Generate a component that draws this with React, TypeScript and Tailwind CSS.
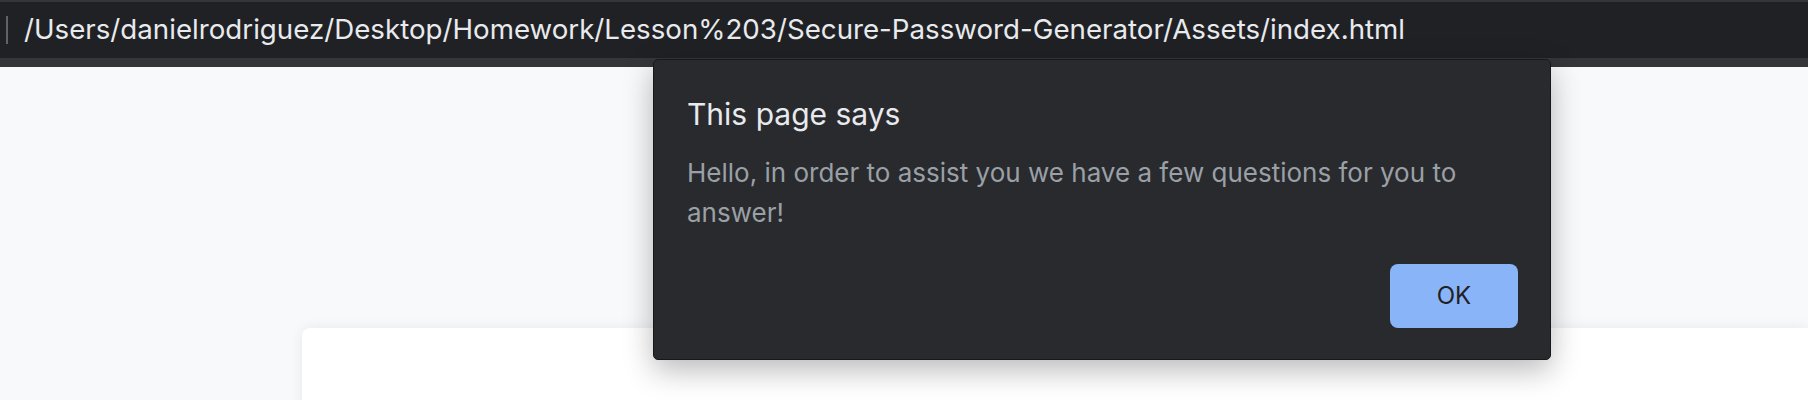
import React from "react";

export default function App() {
  return (
    <div
      className="relative h-[400px] w-full overflow-hidden bg-[#f8f9fa]"
      style={{ fontFamily: "Inter, 'Noto Sans', sans-serif" }}
    >
      <div className="h-[2px] bg-[#35363a]" />
      <div className="flex h-[56px] items-center bg-[#202124]">
        <div className="ml-[6px] h-[28px] w-[2px] bg-[#5f6368]" />
        <div className="ml-[16px] text-[27.7px] leading-none text-[#e8eaed] whitespace-nowrap">
          /Users/danielrodriguez/Desktop/Homework/Lesson%203/Secure-Password-Generator/Assets/index.html
        </div>
      </div>
      <div className="h-[9px] bg-[#35363a]" />
      <div className="pl-[302px] pt-[261px]">
        <div className="h-[200px] rounded-tl-[8px] bg-white shadow-[0_0_14px_rgba(0,0,0,0.07)]" />
      </div>

      <div className="absolute left-[653px] top-[59px] w-[898px] h-[301px] rounded-[5px] border border-[#17181a] bg-[#292a2d] pl-[33px] pr-[32px] pt-[36px] shadow-[0_10px_30px_rgba(0,0,0,0.28)]">
        <div className="text-[30px] leading-[36px] text-[#e8eaed]">This page says</div>
        <div className="mt-[21px] text-[26px] leading-[40px] text-[#9aa0a6]">
          Hello, in order to assist you we have a few questions for you to answer!
        </div>
        <div className="mt-[31px] flex justify-end">
          <button className="flex h-[64px] w-[128px] items-center justify-center rounded-[8px] bg-[#8ab4f8] text-[24px] text-[#202124]">
            OK
          </button>
        </div>
      </div>
    </div>
  );
}
